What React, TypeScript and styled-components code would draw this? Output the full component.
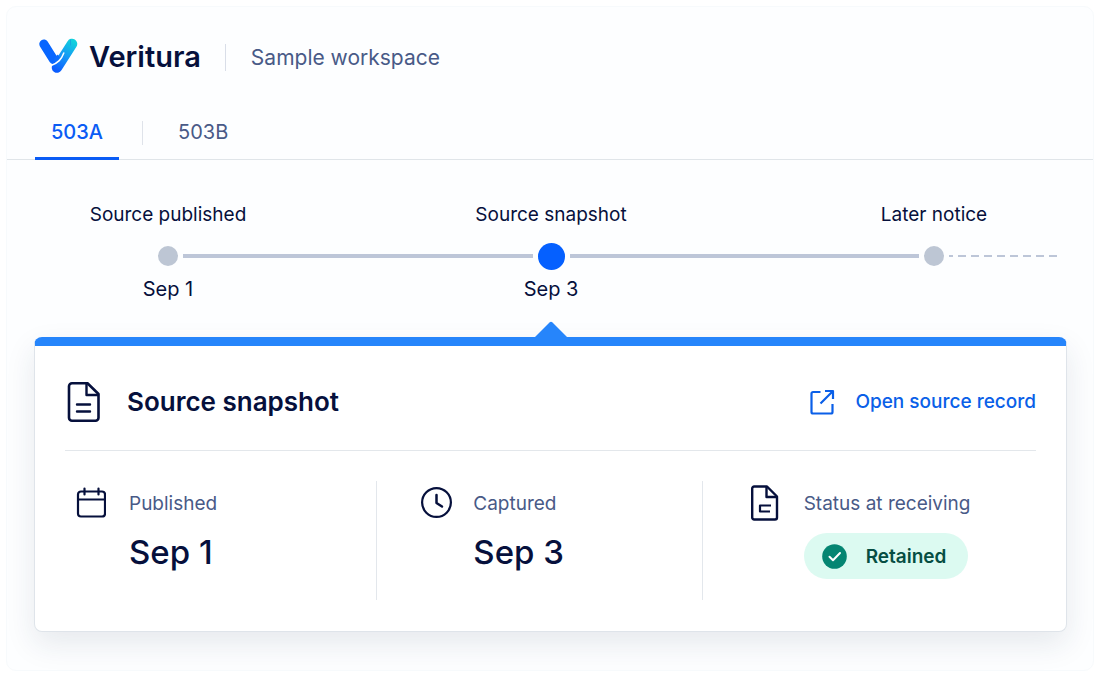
import React from "react";
import styled, { createGlobalStyle } from "styled-components";

const GlobalStyle = createGlobalStyle`
  *, *::before, *::after { box-sizing: border-box; }
  body {
    margin: 0;
    background: #ffffff;
    color: #06103c;
    font-family: Inter, "Liberation Sans", sans-serif;
  }
  h1, h2, ol, dl, dd, dt { margin: 0; padding: 0; }
  ol { list-style: none; }
`;

const Frame = styled.main`
  margin: 6px;
  padding-bottom: 38px;
  border: 1px solid #f7fafc;
  border-radius: 10px;
  background: #fdfeff;
  overflow: hidden;
`;

const Header = styled.header`
  display: flex;
  align-items: center;
  height: 100px;
  padding: 0 32px;
`;

const Brand = styled.h1`
  display: flex;
  align-items: center;
  gap: 11px;
  font-size: 29px;
  line-height: 36px;
  font-weight: 600;
  svg { margin-bottom: 2px; }
`;

const Workspace = styled.span`
  margin-left: 24px;
  padding-left: 25px;
  border-left: 1px solid #d9dee8;
  color: #495a87;
  font-size: 21px;
  line-height: 27px;
`;

const Tabs = styled.nav`
  display: flex;
  align-items: center;
  height: 53px;
  padding: 0 28px;
  border-bottom: 1px solid #e0e5e9;
`;

const Tab = styled.button<{ $active?: boolean }>`
  height: 53px;
  padding: 0 16px;
  border: 0;
  border-bottom: 3px solid ${(p) => (p.$active ? "#0a5cf5" : "transparent")};
  background: none;
  color: ${(p) => (p.$active ? "#0a5cf5" : "#495a87")};
  font-family: inherit;
  font-size: 20px;
  line-height: 24px;
  font-weight: ${(p) => (p.$active ? 500 : 400)};
`;

const TabDivider = styled.span`
  width: 1px;
  height: 24px;
  margin: 0 19px 0 23px;
  background: #dfe3ea;
`;

const Timeline = styled.ol`
  display: grid;
  grid-template-columns: 20px 1fr 27px 1fr 20px 108px;
  grid-template-rows: 33px 28px 24px;
  row-gap: 7px;
  column-gap: 5px;
  align-items: center;
  padding: 42px 36px 36px 151px;
`;

const Step = styled.li`
  display: grid;
  grid-row: 1 / -1;
  grid-template-rows: subgrid;
  justify-content: center;
  justify-items: center;
  align-items: center;
  align-self: stretch;
  white-space: nowrap;
`;

const StepLabel = styled.span`
  align-self: start;
  font-size: 19px;
  line-height: 26px;
`;

const StepDate = styled.span`
  font-size: 20px;
  line-height: 24px;
`;

const Dot = styled.span<{ $active?: boolean }>`
  width: ${(p) => (p.$active ? 27 : 20)}px;
  height: ${(p) => (p.$active ? 27 : 20)}px;
  border-radius: 50%;
  background: ${(p) => (p.$active ? "#0560ff" : "#bdc6d4")};
`;

const Connector = styled.li`
  grid-row: 2;
  height: 4px;
  background: #bdc6d8;
`;

const Upcoming = styled.li`
  grid-row: 2;
  height: 2px;
  background: repeating-linear-gradient(90deg, #bdc6d8 0 8px, transparent 8px 13px) -4px 0;
`;

const Card = styled.section`
  position: relative;
  margin: 0 26px 0 27px;
  padding: 0 30px 31px;
  border: 1px solid #dfe4ea;
  border-top: 9px solid #2685fb;
  border-radius: 8px;
  background: #ffffff;
  box-shadow: 0 12px 30px rgba(30, 50, 80, 0.1);
`;

const Caret = styled.svg`
  position: absolute;
  bottom: 100%;
  left: 50%;
  margin: 0 0 8px -17px;
  display: block;
`;

const CardHeader = styled.div`
  display: flex;
  align-items: center;
  height: 105px;
  padding-top: 7px;
  border-bottom: 1px solid #e3e7eb;
  svg { flex: none; }
`;

const CardTitle = styled.h2`
  flex: 1;
  margin-left: 26px;
  font-size: 26px;
  line-height: 36px;
  font-weight: 600;
`;

const RecordLink = styled.a`
  display: flex;
  align-items: center;
  gap: 20px;
  color: #0a5fe8;
  font-size: 19px;
  line-height: 25px;
  font-weight: 500;
  text-decoration: none;
`;

const Facts = styled.dl`
  display: grid;
  grid-template-columns: 312fr 325fr 333fr;
  margin-top: 30px;
`;

const Fact = styled.div<{ $indent: number }>`
  display: grid;
  grid-template-columns: 32px 1fr;
  grid-template-rows: 44px auto;
  column-gap: 21px;
  align-items: center;
  align-content: start;
  height: 119px;
  padding-left: ${(p) => p.$indent}px;
  border-right: 1px solid #e3e7ec;
  &:last-child { border-right: 0; }
`;

const FactLabel = styled.dt`
  padding-top: 2px;
  color: #495a87;
  font-size: 19px;
  line-height: 24px;
`;

const FactValue = styled.dd`
  grid-column: 2;
  padding-top: 6px;
  font-size: 33px;
  line-height: 42px;
  font-weight: 500;
`;

const StatusValue = styled.dd`
  grid-column: 2;
  padding-top: 8px;
`;

const Badge = styled.span`
  display: inline-flex;
  align-items: center;
  gap: 19px;
  height: 46px;
  padding: 0 22px 0 18px;
  border-radius: 23px;
  background: #dcfaf1;
  color: #064e43;
  font-size: 19px;
  line-height: 25px;
  font-weight: 600;
`;

const Logo = () => (
  <svg width="39" height="36" viewBox="0 0 39 36" fill="none" strokeLinecap="round" aria-hidden="true">
    <defs>
      <linearGradient id="stem" x1="34" y1="3" x2="17" y2="32" gradientUnits="userSpaceOnUse">
        <stop offset="0" stopColor="#10d0dc" />
        <stop offset="0.5" stopColor="#1699f5" />
        <stop offset="1" stopColor="#0a5cff" />
      </linearGradient>
    </defs>
    <path d="M33 6L18 29.500" stroke="url(#stem)" strokeWidth="10.500" />
    <path d="M4.800 6L14.500 21.500" stroke="#0866ff" strokeWidth="9" />
    <path d="M14.500 21.500L17 18L19 16.500L21 20L16 25Z" fill="#0b6cfd" />
    <path d="M24.800 15C22.500 21 19.500 25 11 28" stroke="#fdfeff" strokeWidth="1.500" />
    <path d="M31.500 2V7" stroke="#14a8df" strokeWidth="1" />
  </svg>
);

const DocumentIcon = () => (
  <svg width="36" height="42" viewBox="0 0 36 42" fill="none" stroke="#06103c" strokeWidth="2.600" strokeLinecap="round" strokeLinejoin="round" aria-hidden="true">
    <path d="M7 2.300H22.500L33.500 13V36.700a3 3 0 0 1-3 3H7a3 3 0 0 1-3-3V5.300a3 3 0 0 1 3-3Z" />
    <path d="M21.500 3V14H33" strokeWidth="2.400" />
    <path d="M12 23.500H25M12 30.500H25" strokeWidth="2.400" />
  </svg>
);

const ExternalIcon = () => (
  <svg width="26" height="26" viewBox="0 0 26 26" fill="none" stroke="#0a5fe8" strokeWidth="2.200" strokeLinejoin="round" aria-hidden="true">
    <path d="M11.500 3H4a1.500 1.500 0 0 0-1.500 1.500V23a1.500 1.500 0 0 0 1.500 1.500H22a1.500 1.500 0 0 0 1.500-1.500V15" />
    <path d="M16 2H24V10M24 2L11.500 14.500" />
  </svg>
);

const CalendarIcon = () => (
  <svg width="30" height="32" viewBox="0 0 30 32" fill="none" stroke="#06103c" strokeWidth="2.200" strokeLinecap="round" aria-hidden="true">
    <rect x="2" y="4.500" width="27" height="25" rx="3" />
    <path d="M2.500 12.500H28.500M8.500 1.500V7.500M22.500 1.500V7.500" />
  </svg>
);

const ClockIcon = () => (
  <svg width="32" height="32" viewBox="0 0 32 32" fill="none" stroke="#06103c" strokeWidth="2.200" strokeLinecap="round" strokeLinejoin="round" aria-hidden="true">
    <circle cx="16.500" cy="15.500" r="14.400" />
    <path d="M16.500 8V16L22 19.500" strokeWidth="2.500" />
  </svg>
);

const StatusIcon = () => (
  <svg width="28" height="36" viewBox="0 0 28 36" fill="none" stroke="#06103c" strokeWidth="2.400" strokeLinejoin="round" aria-hidden="true">
    <path d="M3.200 1.500H16L26 11.500V32.500a2 2 0 0 1-2 2H3.200a2 2 0 0 1-2-2V3.500a2 2 0 0 1 2-2Z" />
    <path d="M15.500 2V12H25.500" />
    <path d="M20 20.500H9V26.500H19" strokeWidth="2.200" />
  </svg>
);

const CheckIcon = () => (
  <svg width="25" height="25" viewBox="0 0 25 25" fill="none" aria-hidden="true">
    <circle cx="12.500" cy="12.500" r="12.300" fill="#058572" />
    <path d="M7.500 12.700L11 16.200L18 9" stroke="#ffffff" strokeWidth="2" strokeLinecap="round" strokeLinejoin="round" />
  </svg>
);

export default function App() {
  return (
    <>
      <GlobalStyle />
      <Frame>
        <Header>
          <Brand>
            <Logo />
            Veritura
          </Brand>
          <Workspace>Sample workspace</Workspace>
        </Header>
        <Tabs>
          <Tab type="button" $active>503A</Tab>
          <TabDivider />
          <Tab type="button">503B</Tab>
        </Tabs>
        <Timeline>
          <Step>
            <StepLabel>Source published</StepLabel>
            <Dot />
            <StepDate>Sep 1</StepDate>
          </Step>
          <Connector aria-hidden="true" />
          <Step>
            <StepLabel>Source snapshot</StepLabel>
            <Dot $active />
            <StepDate>Sep 3</StepDate>
          </Step>
          <Connector aria-hidden="true" />
          <Step>
            <StepLabel>Later notice</StepLabel>
            <Dot />
          </Step>
          <Upcoming aria-hidden="true" />
        </Timeline>
        <Card>
          <Caret width="34" height="17" viewBox="0 0 34 17" aria-hidden="true">
            <path d="M0 17L15.500 1.500Q17 0 18.500 1.500L34 17Z" fill="#2685fb" />
          </Caret>
          <CardHeader>
            <DocumentIcon />
            <CardTitle>Source snapshot</CardTitle>
            <RecordLink href="#record">
              <ExternalIcon />
              Open source record
            </RecordLink>
          </CardHeader>
          <Facts>
            <Fact $indent={11}>
              <CalendarIcon />
              <FactLabel>Published</FactLabel>
              <FactValue>Sep 1</FactValue>
            </Fact>
            <Fact $indent={43}>
              <ClockIcon />
              <FactLabel>Captured</FactLabel>
              <FactValue>Sep 3</FactValue>
            </Fact>
            <Fact $indent={48}>
              <StatusIcon />
              <FactLabel>Status at receiving</FactLabel>
              <StatusValue>
                <Badge>
                  <CheckIcon />
                  Retained
                </Badge>
              </StatusValue>
            </Fact>
          </Facts>
        </Card>
      </Frame>
    </>
  );
}
